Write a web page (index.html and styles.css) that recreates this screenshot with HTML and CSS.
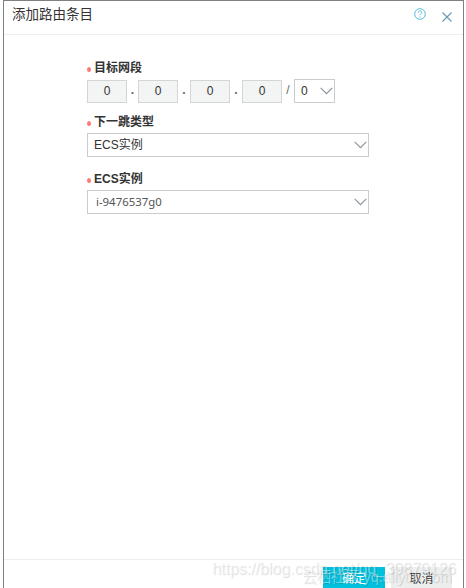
FILE: index.html
```
<!DOCTYPE html>
<html lang="zh-CN">
<head>
    <meta charset="utf-8">
    <title>添加路由条目</title>
    <link rel="stylesheet" href="styles.css">
</head>
<body>
    <div class="dialog">
        <div class="dialog-header">
            <h1>添加路由条目</h1>
            <svg class="icon-help" width="12" height="12" viewBox="0 0 12 12">
                <circle cx="6" cy="6" r="5.3"/>
                <path d="M4.2 4.8C4.2 2.4 7.8 2.4 7.8 4.6C7.8 5.9 6 5.8 6 7.3M6 8.3V9.3"/>
            </svg>
            <svg class="icon-close" width="10" height="10" viewBox="0 0 10 10">
                <path d="M0.5 0.5L9.5 9.5M9.5 0.5L0.5 9.5"/>
            </svg>
        </div>

        <div class="dialog-body">
            <div class="field">
                <label>目标网段</label>
                <div class="cidr">
                    <div class="octet">0</div><span class="dot">.</span>
                    <div class="octet">0</div><span class="dot">.</span>
                    <div class="octet">0</div><span class="dot">.</span>
                    <div class="octet">0</div><span class="slash">/</span>
                    <div class="select mask">
                        <span>0</span>
                        <svg class="arrow" width="13" height="8" viewBox="0 0 13 8"><path d="M0.7 0.9L6.5 6.7L12.3 0.9"/></svg>
                    </div>
                </div>
            </div>
            <div class="field">
                <label>下一跳类型</label>
                <div class="select">
                    <span>ECS实例</span>
                    <svg class="arrow" width="13" height="8" viewBox="0 0 13 8"><path d="M0.7 0.9L6.5 6.7L12.3 0.9"/></svg>
                </div>
            </div>
            <div class="field">
                <label>ECS实例</label>
                <div class="select instance">
                    <span>i-9476537g0</span>
                    <svg class="arrow" width="13" height="8" viewBox="0 0 13 8"><path d="M0.7 0.9L6.5 6.7L12.3 0.9"/></svg>
                </div>
            </div>
        </div>

        <div class="dialog-footer">
            <button class="btn btn-primary">确定</button>
            <button class="btn">取消</button>
        </div>
    </div>
    <div class="watermark watermark-site">云栖社区 yq.aliyun.com</div>
    <div class="watermark watermark-blog">https://blog.csdn.net/qq_39879126</div>
</body>
</html>
```
FILE: styles.css
```
* {
    box-sizing: border-box;
}

body {
    margin: 0;
    height: 588px;
    overflow: hidden;
    position: relative;
    background: #fff;
    color: #333;
    font-family: "Liberation Sans", "Noto Sans CJK SC", sans-serif;
    font-size: 12px;
}

.dialog {
    display: flex;
    flex-direction: column;
    height: 588px;
    margin: 0 2px 0 3px;
    border: 1px solid #808080;
    border-bottom: none;
}

.dialog-header {
    display: flex;
    height: 34px;
    padding: 0 11px 0 8px;
    border-bottom: 1px solid #eee;
}

.dialog-header h1 {
    flex: 1;
    margin: 0;
    font-size: 13.5px;
    font-weight: normal;
    line-height: 28px;
}

svg {
    fill: none;
    flex: none;
}

.icon-help {
    margin: 7px 16px 0 0;
    stroke: #59bdda;
    stroke-width: 1;
}

.icon-close {
    margin-top: 11px;
    stroke: #6299ad;
    stroke-width: 1.1;
}

.dialog-body {
    flex: 1;
    padding: 23px 0 0 83px;
}

.field {
    height: 54px;
}

.field + .field + .field {
    margin-top: 3px;
}

.field label {
    display: flex;
    align-items: center;
    height: 21px;
    padding-bottom: 4px;
    font-weight: bold;
}

.field label::before {
    content: "";
    width: 4px;
    height: 5px;
    margin: 6px 3px 0 0;
    border-radius: 50%;
    background: #f77;
}

.cidr {
    display: flex;
    align-items: flex-end;
    width: 248px;
    height: 24px;
}

.octet {
    flex: none;
    width: 40px;
    height: 23px;
    border: 1px solid #d4d6d6;
    background: #f3f5f5;
    line-height: 21px;
    text-align: center;
}

.dot,
.slash {
    flex: none;
    width: 12px;
    height: 23px;
    line-height: 20px;
    text-align: center;
    color: #666;
}

.dot {
    font-weight: bold;
}

.dot:nth-of-type(1) {
    width: 11px;
}

.select {
    display: flex;
    align-items: center;
    justify-content: space-between;
    width: 282px;
    height: 24px;
    padding: 0 1px 0 6px;
    border: 1px solid #ccc;
    background: #fff;
}

.select span {
    margin-bottom: 3px;
}

.mask {
    flex: none;
    width: 41px;
}

.mask span {
    margin-bottom: 0;
}

.instance {
    padding-left: 8px;
    color: #555;
    font-family: "Noto Sans", sans-serif;
    font-size: 11.4px;
}

.instance span {
    margin-bottom: 1px;
}

.arrow {
    stroke: #8a929a;
    stroke-width: 1.1;
}

.dialog-footer {
    display: flex;
    flex: none;
    justify-content: flex-end;
    gap: 6px;
    height: 29px;
    padding: 7px 11px 0 0;
    border-top: 1px solid #eee;
}

.btn {
    flex: none;
    width: 61px;
    height: 24px;
    padding: 0;
    border: none;
    background: #eceeee;
    color: #333;
    font-family: inherit;
    font-size: 12px;
    line-height: 24px;
}

.btn-primary {
    width: 62px;
    background: #00c1de;
    color: #fff;
}

/* watermarks lie over the footer */
.watermark {
    position: absolute;
    white-space: nowrap;
    color: rgba(255, 255, 255, 0.45);
    text-shadow: 1px 1px 1px rgba(0, 0, 0, 0.14);
}

.watermark-blog {
    left: 212px;
    top: 559px;
    font-size: 15.9px;
    line-height: 20px;
}

.watermark-site {
    left: 302px;
    top: 567px;
    font-size: 14.4px;
    line-height: 20px;
}
```
